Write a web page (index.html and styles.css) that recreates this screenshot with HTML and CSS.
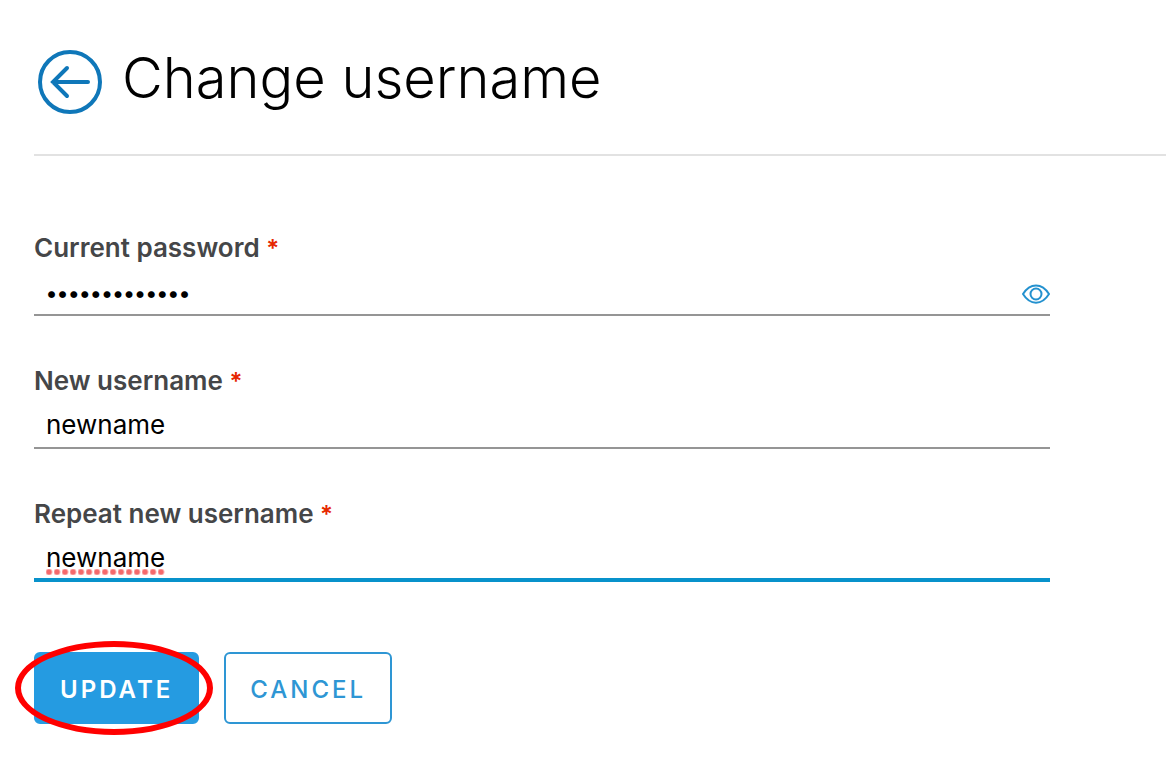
FILE: index.html
```html
<!DOCTYPE html>
<html lang="en">
<head>
<meta charset="utf-8">
<meta name="viewport" content="width=device-width, initial-scale=1">
<title>Change username</title>
<link rel="stylesheet" href="styles.css">
</head>
<body>
<main class="page">
  <header class="page-header">
    <a class="back" href="#" aria-label="Back">
      <svg viewBox="0 0 64 64" fill="none" stroke="currentColor" stroke-width="4" stroke-linecap="round">
        <circle cx="32" cy="32" r="30"/>
        <path d="M50 32H15M29 18L15 32l14 14" stroke-linejoin="miter"/>
      </svg>
    </a>
    <h1 class="title">Change username</h1>
  </header>
  <form class="form">
    <div class="field">
      <label class="label" for="password">Current password <span class="required">*</span></label>
      <div class="control">
        <input class="input input-password" id="password" type="password" value="currentpasswd">
        <button class="reveal" type="button" aria-label="Show password">
          <svg viewBox="0 0 28 20" fill="none" stroke="currentColor" stroke-width="2">
            <path d="M1 10C8 -1.500 20 -1.500 27 10C20 21.500 8 21.500 1 10Z"/>
            <circle cx="14" cy="10" r="5.500"/>
          </svg>
        </button>
      </div>
    </div>
    <div class="field">
      <label class="label" for="username">New username <span class="required">*</span></label>
      <div class="control">
        <input class="input" id="username" type="text" value="newname" spellcheck="false">
      </div>
    </div>
    <div class="field">
      <label class="label" for="repeat">Repeat new username <span class="required">*</span></label>
      <div class="control">
        <input class="input input-active" id="repeat" type="text" value="newname" spellcheck="false">
        <span class="misspelled"></span>
      </div>
    </div>
    <div class="actions">
      <div class="highlighted">
        <button class="button button-primary" type="button">UPDATE</button>
        <span class="ring"></span>
      </div>
      <button class="button" type="button">CANCEL</button>
    </div>
  </form>
</main>
</body>
</html>
```
FILE: styles.css
```css
* {
  box-sizing: border-box;
}

body {
  margin: 0;
  background: #fff;
  color: #000;
  font-family: Inter, "Open Sans", sans-serif;
}

.page {
  padding: 0 0 32px 34px;
}

.page-header {
  display: flex;
  align-items: flex-start;
  gap: 20px;
  padding: 46px 0 40px 4px;
  border-bottom: 2px solid #e2e2e2;
}

.back {
  display: flex;
  width: 64px;
  height: 64px;
  margin-top: 4px;
  color: #0f77b9;
}

.back svg {
  width: 100%;
}

.title {
  margin: 0;
  font-size: 56px;
  font-weight: 300;
  line-height: 64px;
}

.form {
  display: flex;
  flex-direction: column;
  gap: 49px;
  max-width: 1016px;
  padding-top: 76px;
}

.label {
  display: block;
  color: #454648;
  font-size: 26px;
  font-weight: 600;
  line-height: 32px;
}

.required {
  color: #e62700;
  font-size: 24px;
  line-height: 1;
}

.control {
  position: relative;
}

.input {
  display: block;
  width: 100%;
  height: 52px;
  padding: 11px 12px 7px;
  border: 0;
  border-bottom: 2px solid #959595;
  border-radius: 0;
  outline: 0;
  background: none;
  color: #000;
  font: 26px/32px Inter, "Open Sans", sans-serif;
}

.input-password {
  padding: 13px 44px 5px 12px;
  font-size: 22px;
  font-weight: 600;
}

.input-active {
  padding-bottom: 5px;
  border-bottom: 4px solid #0892cb;
}

.reveal {
  position: absolute;
  top: 20px;
  right: 0;
  display: flex;
  width: 28px;
  height: 20px;
  padding: 0;
  border: 0;
  background: none;
  color: #2491cf;
}

.reveal svg {
  width: 100%;
}

.misspelled {
  position: absolute;
  top: 39px;
  left: 12px;
  width: 120px;
  height: 6px;
  background: radial-gradient(circle at 3px 3px, #f5696b 2px, transparent 4px) 0 0 / 8px 6px;
}

.actions {
  display: flex;
  gap: 25px;
  margin-top: 21px;
}

.highlighted {
  position: relative;
}

.button {
  height: 72px;
  padding: 4px 24px 0;
  border: 2px solid #2e96d4;
  border-radius: 6px;
  background: #fff;
  color: #2e96d4;
  font: 500 24px/32px Inter, "Open Sans", sans-serif;
  letter-spacing: 3px;
}

.button-primary {
  border-color: #259be1;
  background: #259be1;
  color: #fff;
  font-weight: 600;
}

.ring {
  position: absolute;
  inset: -11px -14px -11px -19px;
  border: 6px solid #f00;
  border-radius: 50%;
  pointer-events: none;
}
```
